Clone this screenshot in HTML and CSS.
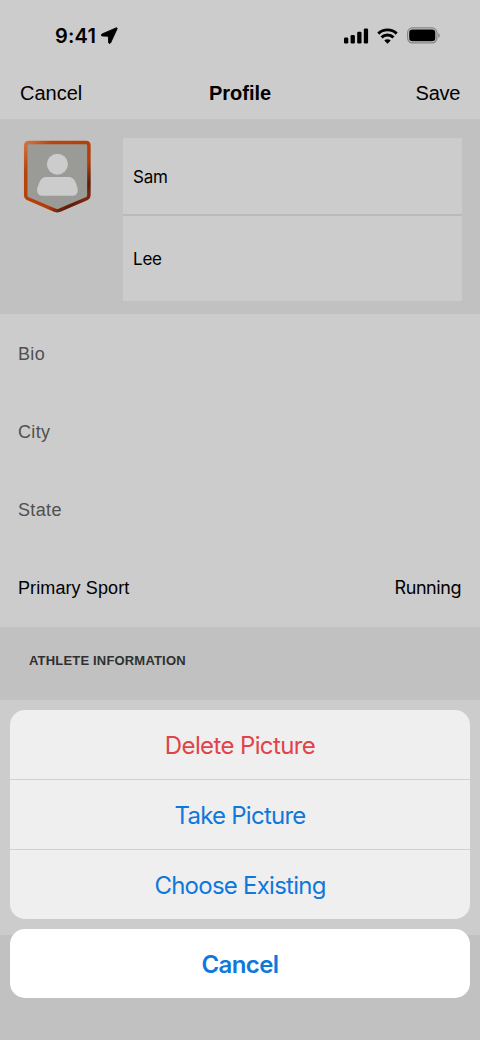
FILE: index.html
```html
<!DOCTYPE html>
<html lang="en">
<head>
<meta charset="utf-8">
<meta name="viewport" content="width=device-width, initial-scale=1">
<title>Profile</title>
<link rel="stylesheet" href="styles.css">
</head>
<body>
<div class="screen">
  <div class="status-bar">
    <div class="status-left">
      <span class="time">9:41</span>
      <svg class="location" width="17" height="17" viewBox="0 0 17 17"><path d="M15.100.9 1 7c-1.200.6-.9 2 .4 2l6 .2.2 6c0 1.400 1.500 1.700 2.100.5L16.100 1.800c.3-.7-.3-1.200-1-.9z" stroke="#000" stroke-width=".9" stroke-linejoin="round"/></svg>
    </div>
    <div class="status-right">
      <svg width="25" height="16" viewBox="0 0 25 16"><rect x="0" y="9.500" width="4.300" height="6" rx="1.300"/><rect x="6.600" y="7" width="4.300" height="8.500" rx="1.300"/><rect x="13.200" y="3.700" width="4.300" height="11.800" rx="1.300"/><rect x="19.800" y="0.500" width="4.300" height="15" rx="1.300"/></svg>
      <svg class="wifi" width="21" height="16" viewBox="0 0 21 16"><g fill="none" stroke="#000" stroke-width="2.900"><path d="M1.300 5.600a13.300 13.300 0 0 1 18.400 0"/><path d="M4.500 9.400a8.700 8.700 0 0 1 12 0"/></g><path d="M10.500 15.700 7.300 12.500a4.600 4.600 0 0 1 6.400 0z"/></svg>
      <svg class="battery" width="33" height="17" viewBox="0 0 33 17"><rect x=".6" y=".9" width="29.300" height="15" rx="4.800" fill="none" stroke="#858585" stroke-width="1.200"/><rect x="2.200" y="2.600" width="26.100" height="11.600" rx="3.200"/><path d="M31.200 6c2 .8 2 4 0 4.800z" fill="#858585"/></svg>
    </div>
  </div>
  <header class="nav-bar">
    <span class="nav-left">Cancel</span>
    <h1 class="nav-title">Profile</h1>
    <span class="nav-right">Save</span>
  </header>
  <section class="identity">
    <svg class="avatar" width="68" height="74" viewBox="0 0 68 74">
      <defs><linearGradient id="frame" x1="0" y1="0" x2="1" y2="1"><stop offset="0" stop-color="#cf7540"/><stop offset=".2" stop-color="#b9440e"/><stop offset=".65" stop-color="#b13d08"/><stop offset=".8" stop-color="#5c1d0b"/><stop offset="1" stop-color="#9d3509"/></linearGradient></defs>
      <path d="M5.700 2.500h57.200q3 0 3 3v50q0 2-1.800 3L36.200 70.300q-2 1-4 0L4.500 58.500q-1.800-1-1.800-3v-50q0-3 3-3z" fill="#9a9a96" stroke="url(#frame)" stroke-width="3.500"/>
      <circle cx="34.400" cy="24.200" r="10.500" fill="#ccc"/>
      <path d="M23.500 37h22c4 0 6 2.600 7.500 6.500l1.300 4c1.400 4.500-.7 8.300-4.500 8.300H19c-3.800 0-5.900-3.800-4.500-8.300l1.400-4C17.400 39.600 19.500 37 23.500 37z" fill="#ccc"/>
    </svg>
    <div class="name-card">
      <div class="name-field first">Sam</div>
      <div class="name-field last">Lee</div>
    </div>
  </section>
  <section class="fields">
    <div class="field placeholder">Bio</div>
    <div class="field placeholder">City</div>
    <div class="field placeholder">State</div>
    <div class="field"><span>Primary Sport</span><span class="sport">Running</span></div>
  </section>
  <h2 class="section-title">ATHLETE INFORMATION</h2>
  <section class="athlete-fields"></section>
  <div class="action-sheet">
    <div class="actions">
      <button class="action delete">Delete Picture</button>
      <button class="action take">Take Picture</button>
      <button class="action choose">Choose Existing</button>
    </div>
    <button class="action cancel">Cancel</button>
  </div>
</div>
</body>
</html>
```
FILE: styles.css
```css
* { box-sizing: border-box; }
body { margin: 0; background: #c1c1c1; color: #000; }
.screen {
  position: relative;
  width: 480px;
  height: 1040px;
  overflow: hidden;
  display: flex;
  flex-direction: column;
  font-family: "Liberation Sans", Arial, sans-serif;
}
.status-bar {
  height: 66px;
  flex: none;
  background: #ccc;
  display: flex;
  justify-content: space-between;
  padding: 5px 40px 0 55px;
}
.status-left, .status-right { display: flex; align-items: center; }
.time { font: 600 20px/24px Inter, sans-serif; letter-spacing: 0.2px; }
.location { margin-left: 5px; }
.wifi { margin-left: 8px; }
.battery { margin-left: 9px; }
.nav-bar {
  height: 54px;
  flex: none;
  background: #ccc;
  border-bottom: 1px solid #c3c3c3;
  display: grid;
  grid-template-columns: 1fr auto 1fr;
  align-items: center;
  padding: 2px 20px 0;
  font-size: 20px;
}
.nav-title { margin: 0; font-size: 20px; font-weight: 700; }
.nav-right { text-align: right; letter-spacing: -0.3px; }
.identity {
  height: 194px;
  flex: none;
  background: #c1c1c1;
  display: flex;
  align-items: flex-start;
  padding: 18px 18px 0 23px;
}
.avatar { margin-top: 2px; }
.name-card {
  margin-left: 32px;
  flex: 1;
  height: 163px;
  background: #ccc;
  font: 400 17px/20px Inter, sans-serif;
  letter-spacing: -0.2px;
}
.name-field { display: flex; align-items: center; padding-left: 10px; }
.first { height: 78px; padding-top: 2px; border-bottom: 2px solid #bababa; }
.last { height: 85px; }
.fields { height: 313px; flex: none; background: #ccc; }
.field {
  height: 78px;
  display: flex;
  align-items: center;
  justify-content: space-between;
  padding: 2px 19px 0 18px;
  font-size: 18px;
  letter-spacing: 0.1px;
}
.placeholder { color: #505050; letter-spacing: 0.35px; }
.sport { font-family: Inter, sans-serif; letter-spacing: -0.45px; padding-bottom: 1px; }
.section-title {
  margin: 0;
  height: 73px;
  flex: none;
  display: flex;
  align-items: center;
  padding: 0 0 6px 29px;
  font: 700 13px/16px "Liberation Sans", sans-serif;
  letter-spacing: 0.18px;
  color: #303030;
}
.athlete-fields { height: 235px; flex: none; background: #ccc; }
.action-sheet {
  position: absolute;
  left: 10px;
  right: 10px;
  bottom: 42px;
  display: flex;
  flex-direction: column;
  gap: 10px;
}
.actions {
  display: flex;
  flex-direction: column;
  border-radius: 15px;
  background: #efefef;
  overflow: hidden;
}
.action {
  height: 70px;
  border: 0;
  border-bottom: 1px solid #d0d0d0;
  background: none;
  padding: 2px 0 0;
  color: #0f78db;
  font: 400 24px/30px Inter, sans-serif;
  letter-spacing: -0.75px;
}
.actions .action:last-child { height: 69px; border-bottom: 0; }
.actions .delete { color: #e14348; letter-spacing: -0.62px; }
.cancel { height: 69px; border: 0; border-radius: 15px; background: #fff; font-weight: 600; letter-spacing: -0.6px; }
```
